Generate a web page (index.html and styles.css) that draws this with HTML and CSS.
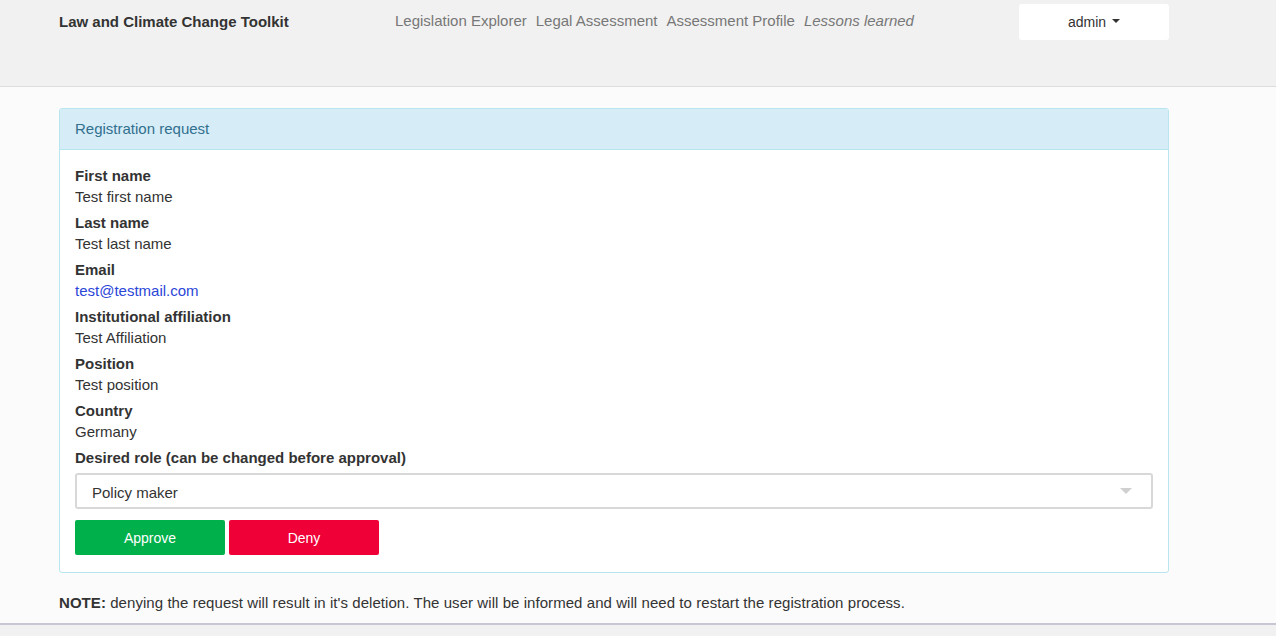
FILE: index.html
```html
<!DOCTYPE html>
<html>
<head>
<meta charset="utf-8">
<link rel="stylesheet" href="styles.css">
</head>
<body>
<header class="topbar">
  <div class="topbar-inner">
    <div class="brand">Law and Climate Change Toolkit</div>
    <nav class="nav">
      <a>Legislation Explorer</a>
      <a>Legal Assessment</a>
      <a>Assessment Profile</a>
      <a class="italic">Lessons learned</a>
    </nav>
    <div class="user">admin <span class="caret"></span></div>
  </div>
</header>
<main class="main">
  <div class="container">
    <section class="panel">
      <div class="panel-heading">Registration request</div>
      <div class="panel-body">
        <div class="field"><div class="label">First name</div><div class="value">Test first name</div></div>
        <div class="field"><div class="label">Last name</div><div class="value">Test last name</div></div>
        <div class="field"><div class="label">Email</div><div class="value"><a class="link">test@testmail.com</a></div></div>
        <div class="field"><div class="label">Institutional affiliation</div><div class="value">Test Affiliation</div></div>
        <div class="field"><div class="label">Position</div><div class="value">Test position</div></div>
        <div class="field"><div class="label">Country</div><div class="value">Germany</div></div>
        <div class="field"><div class="label">Desired role (can be changed before approval)</div></div>
        <div class="select"><span>Policy maker</span><span class="select-caret"></span></div>
        <div class="buttons">
          <button class="btn approve">Approve</button>
          <button class="btn deny">Deny</button>
        </div>
      </div>
    </section>
    <p class="note"><b>NOTE:</b> denying the request will result in it's deletion. The user will be informed and will need to restart the registration process.</p>
  </div>
</main>
<footer class="footer"></footer>
</body>
</html>
```
FILE: styles.css
```css
* { box-sizing: border-box; }
html, body { margin: 0; padding: 0; }
body {
  font-family: "Liberation Sans", Arial, sans-serif;
  font-size: 15px;
  color: #333;
  background: #fbfbfb;
  height: 636px;
  overflow: hidden;
}
.topbar {
  background: #f1f1f1;
  height: 87px;
  border-bottom: 1px solid #dcdcdc;
}
.topbar-inner {
  display: flex;
  align-items: flex-start;
  margin-left: 59px;
  width: 1110px;
}
.brand {
  font-weight: bold;
  font-size: 15px;
  color: #333;
  margin-top: 12px;
  line-height: 20px;
  width: 336px;
}
.nav {
  display: flex;
  gap: 9px;
  margin-top: 11px;
  line-height: 20px;
  color: #777;
  font-size: 15px;
}
.nav .italic { font-style: italic; }
.user {
  margin-left: auto;
  margin-top: 4px;
  width: 150px;
  height: 36px;
  background: #fff;
  border-radius: 3px;
  display: flex;
  align-items: center;
  justify-content: center;
  font-size: 14px;
  color: #333;
  gap: 6px;
}
.caret {
  width: 0; height: 0;
  border-left: 4px solid transparent;
  border-right: 4px solid transparent;
  border-top: 4px solid #333;
  margin-top: -2px;
}
.main { height: 536px; }
.container {
  margin-left: 59px;
  width: 1110px;
  padding-top: 21px;
}
.panel {
  background: #fff;
  border: 1px solid #b8e6ef;
  border-radius: 3px;
}
.panel-heading {
  background: #d6ecf6;
  color: #31708f;
  border-bottom: 1px solid #b8e6ef;
  height: 41px;
  padding: 0 15px 2px;
  display: flex;
  align-items: center;
  font-size: 15px;
}
.panel-body {
  padding: 15px 15px 17px;
}
.field { margin-bottom: 5px; line-height: 21px; }
.label { font-weight: bold; }
.link { color: #2b46d8; }
.select {
  height: 36px;
  border: 2px solid #d8d8d8;
  border-radius: 3px;
  display: flex;
  align-items: center;
  justify-content: space-between;
  padding: 3px 19px 0 15px;
  font-size: 15px;
  color: #333;
}
.select-caret {
  width: 0; height: 0;
  border-left: 6px solid transparent;
  border-right: 6px solid transparent;
  border-top: 6px solid #d0d0d0;
  margin-top: -3px;
}
.buttons {
  display: flex;
  gap: 4px;
  margin-top: 11px;
}
.btn {
  width: 150px;
  height: 35px;
  border: none;
  border-radius: 2px;
  color: #fff;
  font-family: "Liberation Sans", Arial, sans-serif;
  font-size: 14px;
}
.approve { background: #00b04a; }
.deny { background: #ef0037; }
.note {
  margin: 20px 0 0;
  line-height: 20px;
  font-size: 15px;
  color: #333;
  letter-spacing: 0.004em;
}
.footer {
  border-top: 2px solid #c8c6d4;
  background: #f1f1f1;
  height: 20px;
}
```
